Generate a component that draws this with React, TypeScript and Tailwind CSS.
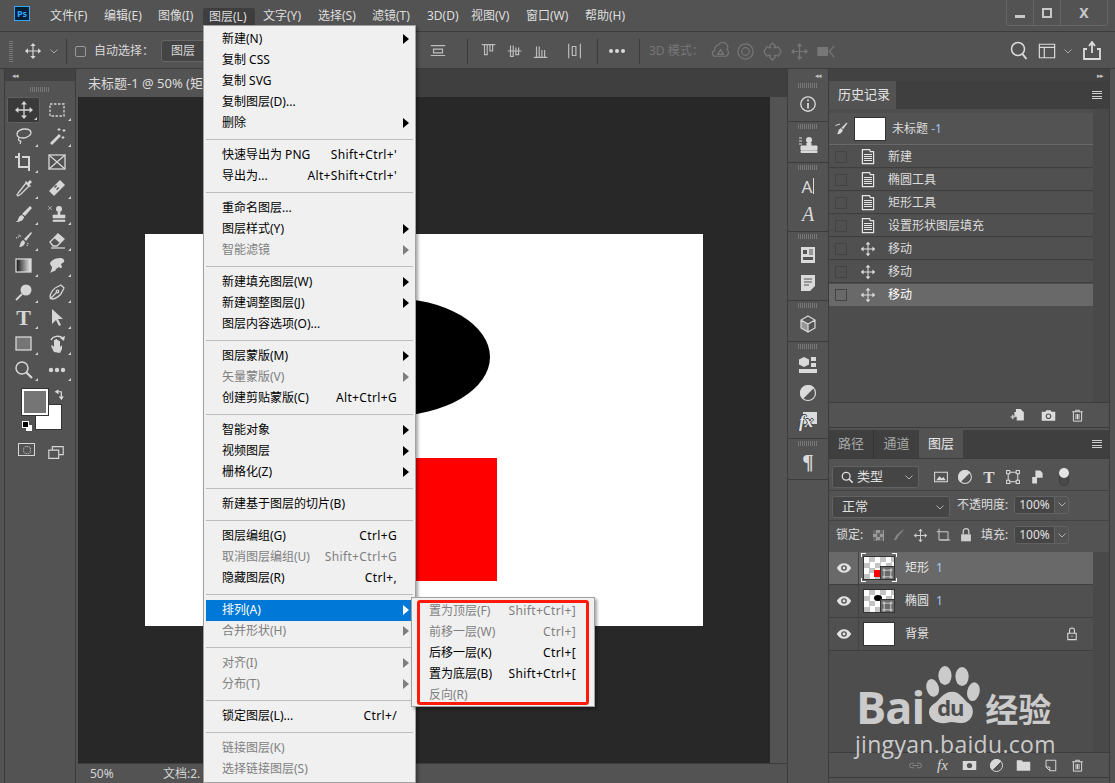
import type { ReactNode } from "react"

type MenuItem = { label: string; key?: string; arrow?: boolean; off?: boolean; active?: boolean }

// null means a separator row
const layerMenu: (MenuItem | null)[] = [
  { label: "新建(N)", arrow: true },
  { label: "复制 CSS" },
  { label: "复制 SVG" },
  { label: "复制图层(D)..." },
  { label: "删除", arrow: true },
  null,
  { label: "快速导出为 PNG", key: "Shift+Ctrl+'" },
  { label: "导出为...", key: "Alt+Shift+Ctrl+'" },
  null,
  { label: "重命名图层..." },
  { label: "图层样式(Y)", arrow: true },
  { label: "智能滤镜", arrow: true, off: true },
  null,
  { label: "新建填充图层(W)", arrow: true },
  { label: "新建调整图层(J)", arrow: true },
  { label: "图层内容选项(O)..." },
  null,
  { label: "图层蒙版(M)", arrow: true },
  { label: "矢量蒙版(V)", arrow: true, off: true },
  { label: "创建剪贴蒙版(C)", key: "Alt+Ctrl+G" },
  null,
  { label: "智能对象", arrow: true },
  { label: "视频图层", arrow: true },
  { label: "栅格化(Z)", arrow: true },
  null,
  { label: "新建基于图层的切片(B)" },
  null,
  { label: "图层编组(G)", key: "Ctrl+G" },
  { label: "取消图层编组(U)", key: "Shift+Ctrl+G", off: true },
  { label: "隐藏图层(R)", key: "Ctrl+," },
  null,
  { label: "排列(A)", arrow: true, active: true },
  { label: "合并形状(H)", arrow: true, off: true },
  null,
  { label: "对齐(I)", arrow: true, off: true },
  { label: "分布(T)", arrow: true, off: true },
  null,
  { label: "锁定图层(L)...", key: "Ctrl+/" },
  null,
  { label: "链接图层(K)", off: true },
  { label: "选择链接图层(S)", off: true },
]

const arrangeMenu: MenuItem[] = [
  { label: "置为顶层(F)", key: "Shift+Ctrl+]", off: true },
  { label: "前移一层(W)", key: "Ctrl+]", off: true },
  { label: "后移一层(K)", key: "Ctrl+[" },
  { label: "置为底层(B)", key: "Shift+Ctrl+[" },
  { label: "反向(R)", off: true },
]

function MenuRow({ item }: { item: MenuItem }) {
  const tone = item.active ? "bg-[#0078d7] text-white" : item.off ? "text-[#7f7f7f]" : "text-black"
  return (
    <div className={`relative flex h-[21px] items-center justify-between pl-[16px] pr-[16px] ${tone}`}>
      <span>{item.label}</span>
      {item.key && <span className="tracking-[0.35px]">{item.key}</span>}
      {item.arrow && (
        <span
          className={`absolute right-[4px] top-[5px] border-y-[5px] border-l-[6px] border-y-transparent ${
            item.active ? "border-l-white" : item.off ? "border-l-[#7f7f7f]" : "border-l-black"
          }`}
        />
      )}
    </div>
  )
}

function Ic({ children, size = 20, className = "" }: { children: ReactNode; size?: number; className?: string }) {
  return (
    <svg viewBox="0 0 20 20" width={size} height={size} fill="none" stroke="currentColor" strokeWidth="1.3" className={className}>
      {children}
    </svg>
  )
}

const MoveGlyph = () => (
  <>
    <path d="M10 3v14M3 10h14" />
    <path d="M10 1l3 3.4H7zM10 19l3-3.4H7zM1 10l3.4-3v6zM19 10l-3.4-3v6z" fill="currentColor" stroke="none" />
  </>
)

const Trash = () => (
  <path d="M3 5h14M7.500 5V3h5v2M4.500 5v12.500h11V5M8 8v7M10 8v7M12 8v7" />
)

const tools: ReactNode[] = [
  <MoveGlyph />,
  <rect x="3" y="4" width="14" height="12" strokeDasharray="2.500 1.500" />,
  <path d="M3 8c0-3 4-5 8-5s6 2 6 4-4 5-8 5c-3 0-6-1-6-4zM5 12c-1 2 0 3 1 3s1 1 0 3" />,
  <>
    <path d="M3 17L12 8l2 2-9 9z" fill="currentColor" stroke="none" />
    <path d="M12 2v3M10.500 3.500h3M17 3v3M15.500 4.500h3M16 10v3M14.500 11.500h3" strokeWidth="1" />
  </>,
  <path d="M1 5h4V1M5 5v10h11M15 19v-4M15 15V5H8" strokeWidth="2" />,
  <>
    <rect x="2" y="3" width="16" height="14" />
    <path d="M2 3l16 14M18 3L2 17" />
  </>,
  <>
    <path d="M12 5l3 3-8 8-3 2-1-1 2-3z" />
    <path d="M11 4l5 5 1-1-1.500-1.500L18 4l-2-2-2.500 2.500L12 3z" fill="currentColor" stroke="none" />
  </>,
  <>
    <path d="M2 13L13 2l5 5L7 18z" fill="currentColor" stroke="none" />
    <path d="M8 8l4 4" stroke="#535353" strokeWidth="3" strokeDasharray="1.500 1.500" />
  </>,
  <>
    <path d="M16 2l2 2-7 8-3-2z" fill="currentColor" stroke="none" />
    <path d="M8 11l2 2c0 3-4 5-8 5 2-1 2-3 3-5 1-1 2-2 3-2z" fill="currentColor" stroke="none" />
  </>,
  <>
    <circle cx="12" cy="5" r="3" fill="currentColor" stroke="none" />
    <path d="M11 8h2v3h5v3H6v-3h5zM6 16h12v1.500H6zM1 2l4 4M5 2L1 6" fill="currentColor" stroke="currentColor" strokeWidth=".6" />
  </>,
  <>
    <path d="M17 2l1 1-6 8-2-2z" fill="currentColor" stroke="none" />
    <path d="M9 10l2 2c0 3-3 5-6 5 1-1 1-3 2-5z" fill="currentColor" stroke="none" />
    <path d="M2 8l5-2-3-1M14 13l-1 3" strokeDasharray="1 1" />
  </>,
  <>
    <path d="M3 12l8-8 6 5-7 7H6z" />
    <path d="M11 4l6 5-4 4-6-5z" fill="currentColor" stroke="none" />
    <path d="M4 18h14" />
  </>,
  <>
    <defs>
      <linearGradient id="toolGrad" x1="0" x2="1" y1="0" y2="0">
        <stop offset="0" stopColor="#111" />
        <stop offset="1" stopColor="#eee" />
      </linearGradient>
    </defs>
    <rect x="2" y="3" width="15" height="13" fill="url(#toolGrad)" />
  </>,
  <path d="M3 17c1-2 2-4 2-6L3 8c0-3 5-6 10-6 3 0 5 2 4 4l-3 2 1 3c-1 2-2 1-3 0l-3 2-1 2c-2 0-3 1-5 2z" fill="currentColor" stroke="none" />,
  <>
    <circle cx="12" cy="8" r="5.500" fill="currentColor" stroke="none" />
    <path d="M8 12l-6 6" strokeWidth="1.800" />
  </>,
  <>
    <path d="M3 15c0-4 4-9 7-10l4-2 3 3-2 4c-1 3-6 7-10 7zM3 17l7-7" />
    <circle cx="10.500" cy="9.500" r="1.300" />
  </>,
  <span />,
  <path d="M5 1l11 10h-5l3 6-2 1-3-6-4 4z" fill="currentColor" stroke="none" />,
  <rect x="2" y="3" width="15" height="13" fill="#757575" stroke="currentColor" />,
  <>
    <path d="M7 18l-3-6 1-1 2 2V6h1.500v5-6H10v6-5h1.500v5-4H13v6l2-2v4l-2 4z" fill="currentColor" stroke="none" />
    <path d="M4 6c2-4 8-5 12-2" strokeWidth="1.500" />
    <path d="M17 7l1-5-5 2z" fill="currentColor" stroke="none" />
  </>,
  <>
    <circle cx="8" cy="8" r="6" strokeWidth="1.500" />
    <path d="M12.500 12.500L18 18" strokeWidth="2.200" />
  </>,
  <>
    <circle cx="4" cy="10" r="2.200" fill="currentColor" stroke="none" />
    <circle cx="10" cy="10" r="2.200" fill="currentColor" stroke="none" />
    <circle cx="16" cy="10" r="2.200" fill="currentColor" stroke="none" />
  </>,
]

function Handle({ className = "" }: { className?: string }) {
  return <div className={`h-[5px] w-[20px] bg-[repeating-linear-gradient(90deg,#777_0_1px,transparent_1px_2px)] ${className}`} />
}

function ToolColumn() {
  return (
    <div className="flex h-full w-[78px] shrink-0 flex-col pl-[4px] pr-[2px]">
      <div className="flex h-full flex-col border-x border-[#3c3c3c]">
        <div className="flex h-[12px] items-center bg-[#424242] pl-[7px] text-[7px] leading-none tracking-[-1px] text-[#c4c4c4]">◂◂</div>
        <div className="flex h-[16px] items-center justify-center">
          <Handle />
        </div>
        <div className="grid grid-cols-[33px_33px] auto-rows-[26px] pl-[2px] text-[#d6d6d6]">
          {tools.map((tool, i) => (
            <div
              key={i}
              className={`relative flex items-center justify-center rounded-[2px] ${
                i === 0 ? "border border-[#5f5f5f] bg-[#3a3a3a]" : ""
              }`}
            >
              {i === 16 ? (
                <span className="font-['Liberation_Serif',serif] text-[22px] font-bold leading-none">T</span>
              ) : (
                <Ic>{tool}</Ic>
              )}
              {i !== 5 && (
                <span className="absolute bottom-[2px] right-[2px] border-b-[3px] border-l-[3px] border-b-[#d0d0d0] border-l-transparent" />
              )}
            </div>
          ))}
        </div>
        {/* foreground and background swatches */}
        <div className="relative ml-[17px] mt-[6px] h-[46px] w-[48px]">
          <div className="absolute left-[13px] top-[15px] h-[26px] w-[27px] border border-[#333] bg-white" />
          <div className="absolute left-0 top-0 h-[26px] w-[26px] border-2 border-white bg-[#757575] outline outline-1 outline-[#333]" />
          <svg viewBox="0 0 12 12" width="11" height="11" className="absolute left-[32px] top-0 text-[#ddd]" fill="none" stroke="currentColor" strokeWidth="1.300">
            <path d="M1 3h7v8M5 1L2 3l3 2M6 8l2 3 2-3" />
          </svg>
          <div className="absolute left-[4px] top-[36px] h-[6px] w-[6px] bg-white" />
          <div className="absolute left-0 top-[32px] h-[7px] w-[7px] border border-white bg-black" />
        </div>
        <div className="mt-[8px] flex gap-[12px] pl-[13px] text-[#d6d6d6]">
          <div className="flex h-[13px] w-[17px] items-center justify-center border border-[#d6d6d6]">
            <span className="h-[8px] w-[8px] rounded-full border border-dotted border-[#d6d6d6]" />
          </div>
          <Ic size={18}>
            <path d="M2 8h11v9H2zM6 8V4h12v9h-5" />
          </Ic>
        </div>
      </div>
    </div>
  )
}

function TitleBar() {
  const items: [string, string][] = [
    ["文件(F)", "w-[54px]"],
    ["编辑(E)", "w-[54px]"],
    ["图像(I)", "w-[45px]"],
    ["图层(L)", "w-[60px]"],
    ["文字(Y)", "w-[55px]"],
    ["选择(S)", "w-[54px]"],
    ["滤镜(T)", "w-[55px]"],
    ["3D(D)", "w-[44px]"],
    ["视图(V)", "w-[55px]"],
    ["窗口(W)", "w-[59px]"],
    ["帮助(H)", "w-[60px]"],
  ]
  return (
    <div className="flex h-[32px] shrink-0 items-start border-b border-[#3c3c3c] text-[#dedede]">
      <div className="ml-[14px] mt-[6px] flex h-[15px] w-[16px] items-center justify-center border border-[#31a8ff] bg-[#001e36] text-[9px] font-bold leading-none text-[#31a8ff]">
        Ps
      </div>
      <div className="ml-[20px] flex h-[31px] items-center">
        {items.map(([label, width], i) => (
          <div key={label} className={width}>
            {i === 3 ? (
              <div className="mt-[2px] flex h-[18px] w-[52px] items-center rounded-t-[2px] bg-[#3e3e3e] pl-[6px]">{label}</div>
            ) : (
              <span>{label}</span>
            )}
          </div>
        ))}
      </div>
      <div className="ml-auto mr-[7px] flex h-[26px] w-[102px] rounded-b-[4px] border-x border-b border-[#666] text-[#c8c8c8]">
        <div className="flex w-[27px] items-end justify-center border-r border-[#666] pb-[7px]">
          <span className="h-[3px] w-[10px] bg-[#c8c8c8]" />
        </div>
        <div className="flex w-[27px] items-center justify-center border-r border-[#666]">
          <span className="h-[10px] w-[10px] border-2 border-[#c8c8c8]" />
        </div>
        <div className="flex flex-1 items-center justify-center text-[14px] font-bold leading-none">X</div>
      </div>
    </div>
  )
}

function AlignIcon({ d }: { d: string }) {
  return (
    <Ic size={18} className="text-[#bdbdbd]">
      <path d={d} />
    </Ic>
  )
}

function OptionsBar() {
  return (
    <div className="flex h-[37px] shrink-0 items-center border-b border-[#3c3c3c] pt-[2px] text-[#d8d8d8]">
      <div className="ml-[9px] h-[22px] w-[4px] bg-[repeating-linear-gradient(0deg,#777_0_1px,transparent_1px_2px)]" />
      <Ic size={18} className="ml-[11px]">
        <MoveGlyph />
      </Ic>
      <svg viewBox="0 0 8 5" width="8" height="5" className="ml-[8px] text-[#a8a8a8]" fill="none" stroke="currentColor">
        <path d="M.5.500L4 4l3.500-3.500" />
      </svg>
      <div className="ml-[8px] h-[25px] w-px bg-[#3c3c3c]" />
      <div className="ml-[8px] h-[11px] w-[11px] rounded-[2px] border border-[#999]" />
      <span className="ml-[8px] w-[60px]">自动选择：</span>
      <div className="ml-[7px] flex h-[22px] w-[70px] items-center rounded-[3px] border border-[#666] bg-[#444] pl-[9px]">图层</div>
      <div className="ml-[198px] flex items-center">
        <AlignIcon d="M2 4h16M2 15h16M5 8h10v4H5z" />
        <div className="ml-[20px] h-[25px] w-px bg-[#3c3c3c]" />
        <div className="ml-[12px] flex items-center gap-[8px]">
          <AlignIcon d="M2 3h15M5 3v11h3V3M11 3v7h3V3" />
          <AlignIcon d="M2 10h15M5 4v12h3V4M11 6v8h3V6" />
          <AlignIcon d="M2 17h15M5 5v12h3V5M11 9v8h3V9" />
        </div>
        <div className="ml-[16px]">
          <AlignIcon d="M3 2v16M16 2v16M7 5h4v10H7z" />
        </div>
        <div className="ml-[13px] h-[25px] w-px bg-[#3c3c3c]" />
        <div className="ml-[11px] flex gap-[2px]">
          <span className="h-[4px] w-[4px] rounded-full bg-[#d8d8d8]" />
          <span className="h-[4px] w-[4px] rounded-full bg-[#d8d8d8]" />
          <span className="h-[4px] w-[4px] rounded-full bg-[#d8d8d8]" />
        </div>
        <div className="ml-[14px] h-[25px] w-px bg-[#3c3c3c]" />
      </div>
      <span className="ml-[9px] w-[59px] text-[#777]">3D 模式：</span>
      <div className="ml-[3px] flex items-center gap-[8px] text-[#777]">
        <Ic size={19} className="-mr-[2px]">
          <path d="M8 3a5 5 0 0 1 9 5 4 4 0 0 1-3 7H5a3 3 0 0 1-1-6 5 5 0 0 1 4-6zM10 8l3 5H7z" />
        </Ic>
        <Ic size={19}>
          <circle cx="10" cy="10" r="8" />
          <circle cx="10" cy="10" r="4" />
        </Ic>
        <Ic size={19}>
          <path d="M10 1l3 3-1 2h2l2-1 3 5-3 5-2-1h-2l1 2-3 3-3-3 1-2H6l-2 1-3-5 3-5 2 1h2L7 4z" />
        </Ic>
        <Ic size={19}>
          <MoveGlyph />
        </Ic>
        <Ic size={19}>
          <path d="M1 6h10v8H1z" fill="currentColor" />
          <path d="M18 4l-5 6 5 6" />
        </Ic>
      </div>
      <div className="ml-auto mr-[13px] flex items-center text-[#dcdcdc]">
        <Ic size={20}>
          <circle cx="9" cy="8" r="6.500" strokeWidth="1.500" />
          <path d="M13.500 13l4 5" strokeWidth="2" />
        </Ic>
        <Ic size={18} className="ml-[9px]">
          <path d="M1.500 2.500h17v15h-17zM1.500 6h17M7 6v11.500" />
        </Ic>
        <svg viewBox="0 0 8 5" width="8" height="5" className="ml-[8px] text-[#a8a8a8]" fill="none" stroke="currentColor">
          <path d="M.5.500L4 4l3.500-3.500" />
        </svg>
        <Ic size={20} className="ml-[10px]">
          <path d="M5 8H2v10h16V8h-3M7 5l3-4 3 4M10 2v10" strokeWidth="1.800" />
        </Ic>
      </div>
    </div>
  )
}

function CanvasArea() {
  return (
    <div className="flex min-w-0 flex-1 flex-col">
      <div className="flex h-[28px] shrink-0 bg-[#3f3f3f]">
        <div className="flex w-[140px] items-center bg-[#535353] pl-[10px] pt-[2px] text-[13px] text-[#dcdcdc]">未标题-1 @ 50% (矩</div>
      </div>
      <div className="flex min-h-0 flex-1">
        <div className="flex flex-1 items-center justify-center bg-[#282828]">
          <div className="relative h-[392px] w-[558px] bg-white">
            <div className="absolute left-[145px] top-[64px] h-[118px] w-[200px] rounded-[50%] bg-black" />
            <div className="absolute left-[229px] top-[224px] h-[123px] w-[123px] bg-[#ff0000]" />
          </div>
        </div>
        <div className="w-[17px] shrink-0 bg-[#535353]" />
      </div>
      <div className="flex h-[20px] shrink-0 items-center border-t border-[#3c3c3c] text-[#d4d4d4]">
        <span className="ml-[12px] w-[73px]">50%</span>
        <span>文档:2.</span>
      </div>
    </div>
  )
}

function DockIcon({ children }: { children: ReactNode }) {
  return <div className="flex h-[28px] items-center justify-center text-[#dadada]">{children}</div>
}

function DockStrip() {
  const groups: ReactNode[][] = [
    [
      <Ic size={18}>
        <circle cx="10" cy="10" r="8" strokeWidth="1.500" />
        <path d="M10 9v6" strokeWidth="2" />
        <path d="M10 5v2" strokeWidth="2" />
      </Ic>,
    ],
    [
      <Ic size={20}>
        <circle cx="11" cy="5" r="3" fill="currentColor" stroke="none" />
        <path d="M9 8h4v3h6v4H3v-4h6zM3 16h16v1.500H3zM1 3h3M1 6h3M1 9h3" fill="currentColor" strokeWidth="1" />
      </Ic>,
    ],
    [
      <span className="flex items-center text-[17px] leading-none">
        A<span className="ml-[1px] h-[16px] w-px bg-[#dadada]" />
      </span>,
      <span className="font-['Liberation_Serif',serif] text-[20px] italic leading-none">A</span>,
    ],
    [
      <Ic size={20}>
        <path d="M3 2h14v16H3zM9 5v4H5V5zM5 12h10v3H5z" fill="currentColor" fillRule="evenodd" stroke="none" />
        <path d="M11 5h4M11 7h4M11 9h4" stroke="#535353" strokeWidth="1" />
      </Ic>,
      <Ic size={20}>
        <path d="M3 2h14v11l-5 5H3z" fill="currentColor" stroke="none" />
        <path d="M6 6h8M6 9h8M6 12h5" stroke="#535353" strokeWidth="1" />
      </Ic>,
    ],
    [
      <Ic size={20}>
        <path d="M10 2l7 4v8l-7 4-7-4V6zM3 6l7 4 7-4M10 10v8" strokeWidth="1.200" />
        <path d="M3 6l7 4v8l-7-4z" fill="currentColor" stroke="none" opacity=".5" />
      </Ic>,
    ],
    [
      <Ic size={20}>
        <path d="M6 2l5 2.500v5L6 12 1 9.500v-5z" fill="currentColor" stroke="none" />
        <path d="M13 2h5v4h-5zM13 8h5v4h-5z" fill="currentColor" stroke="none" />
        <path d="M1 14h18v4H1z" fill="currentColor" stroke="none" />
      </Ic>,
      <Ic size={20}>
        <circle cx="10" cy="10" r="7.500" strokeWidth="1.200" />
        <path d="M4.700 15.300L15.300 4.700A7.500 7.500 0 0 0 4.700 15.300z" fill="currentColor" />
      </Ic>,
      <div className="relative h-[18px] w-[18px]">
        <div className="absolute right-0 top-0 h-[12px] w-[14px] bg-[#dadada]" />
        <span className="absolute bottom-0 left-0 font-['Liberation_Serif',serif] text-[17px] font-bold italic leading-none text-[#e4e4e4] [text-shadow:1px_0_0_#3c3c3c,-1px_0_0_#3c3c3c,0_-1px_0_#3c3c3c]">
          fx
        </span>
      </div>,
    ],
    [<span className="font-['Liberation_Serif',serif] text-[21px] font-bold leading-none">¶</span>],
  ]
  return (
    <div className="w-[40px] shrink-0 pt-[12px]">
      {groups.map((group, i) => (
        <div key={i} className="border-b border-[#3c3c3c] pb-[2px] pt-[2px]">
          <Handle className="mx-auto" />
          <div className="mt-[2px] mb-[1px]">
            {group.map((icon, j) => (
              <DockIcon key={j}>{icon}</DockIcon>
            ))}
          </div>
        </div>
      ))}
    </div>
  )
}

function PanelMenuIcon() {
  return (
    <div className="ml-auto mr-[7px] flex h-[9px] w-[10px] flex-col justify-between self-center">
      <span className="h-px bg-[#cfcfcf]" />
      <span className="h-px bg-[#cfcfcf]" />
      <span className="h-px bg-[#cfcfcf]" />
      <span className="h-px bg-[#cfcfcf]" />
    </div>
  )
}

const DocIcon = () => (
  <Ic size={17} className="text-[#e6e6e6]">
    <path d="M3 1.500h9l1 2.500h4v15H3z" strokeWidth="1.500" />
    <path d="M5 7.500h10M5 10h10M5 12.500h10M5 15h10" strokeWidth="1.300" />
  </Ic>
)

function HistoryPanel() {
  const rows: [string, boolean][] = [
    ["新建", true],
    ["椭圆工具", true],
    ["矩形工具", true],
    ["设置形状图层填充", true],
    ["移动", false],
    ["移动", false],
    ["移动", false],
  ]
  return (
    <div className="flex h-[347px] flex-col border-b border-[#3c3c3c] bg-[#4d4d4d]">
      <div className="flex h-[28px] shrink-0 bg-[#3f3f3f]">
        <div className="flex w-[67px] items-center bg-[#535353] pl-[9px] text-[13px] text-[#e4e4e4]">历史记录</div>
        <PanelMenuIcon />
      </div>
      <div className="flex min-h-0 flex-1">
        <div className="flex-1 pt-[4px]">
          <div className="flex h-[32px] items-center border-b border-[#6a6a6a] bg-[#535353]">
            <Ic size={15} className="ml-[5px] text-[#dcdcdc]">
              <path d="M17 2l1 1-6 8-2-2z" fill="currentColor" stroke="none" />
              <path d="M9 10l2 2c0 3-3 5-6 5 1-1 1-3 2-5zM2 6l6-2" fill="currentColor" />
            </Ic>
            <div className="ml-[5px] h-[24px] w-[32px] border border-[#333] bg-white" />
            <span className="ml-[6px] text-[#dcdcdc]">
              未标题 <span className="text-[#9cc4ee]">-1</span>
            </span>
          </div>
          {rows.map(([label, doc], i) => (
            <div
              key={i}
              className={`mb-px mt-px flex h-[22px] items-center ${
                i === 6 ? "bg-[#696969] text-white" : "border-b border-[#3f3f3f] bg-[#505050] text-[#dcdcdc]"
              }`}
            >
              <div className="ml-[6px] h-[12px] w-[12px] border border-[#434343]" />
              <div className="ml-[13px] flex w-[16px] justify-center">
                {doc ? (
                  <DocIcon />
                ) : (
                  <Ic size={16} className="text-[#e0e0e0]">
                    <MoveGlyph />
                  </Ic>
                )}
              </div>
              <span className="ml-[12px]">{label}</span>
            </div>
          ))}
        </div>
        <div className="w-[16px] shrink-0 bg-[#494949]" />
      </div>
      <div className="flex h-[25px] shrink-0 items-center justify-end gap-[14px] border-t border-[#3c3c3c] bg-[#535353] pr-[24px] text-[#dcdcdc]">
        <Ic size={15} className="mr-[3px]">
          <path d="M10 2h5l4 4v10h-8v-5H8V6h2zM2 12h6M5 9v6" fill="currentColor" strokeWidth="1.500" />
        </Ic>
        <Ic size={15}>
          <path d="M1 5h5l1-2h6l1 2h5v12H1z" fill="currentColor" stroke="none" />
          <circle cx="10" cy="11" r="3" stroke="#535353" strokeWidth="1.500" />
        </Ic>
        <Ic size={15}>
          <Trash />
        </Ic>
      </div>
    </div>
  )
}

function SelectBox({ label, className, icon }: { label: string; className: string; icon?: ReactNode }) {
  return (
    <div className={`flex items-center rounded-[3px] border border-[#626262] bg-[#454545] text-[13px] text-[#e0e0e0] ${className}`}>
      {icon}
      <span>{label}</span>
      <svg viewBox="0 0 8 5" width="8" height="5" className="ml-auto mr-[5px] text-[#b0b0b0]" fill="none" stroke="currentColor">
        <path d="M.5.500L4 4l3.500-3.500" />
      </svg>
    </div>
  )
}

function PercentBox({ className = "" }: { className?: string }) {
  return (
    <div className={`ml-[5px] flex h-[18px] w-[55px] rounded-[3px] border border-[#626262] text-[#e0e0e0] ${className}`}>
      <div className="flex w-[39px] items-center justify-center bg-[#454545]">100%</div>
      <div className="flex flex-1 items-center justify-center border-l border-[#626262]">
        <svg viewBox="0 0 8 5" width="8" height="5" className="text-[#b0b0b0]" fill="none" stroke="currentColor">
          <path d="M.5.500L4 4l3.500-3.500" />
        </svg>
      </div>
    </div>
  )
}

function Thumb({ kind, selected }: { kind: "rect" | "ellipse" | "white"; selected?: boolean }) {
  return (
    <div className="relative ml-[4px] h-[24px] w-[32px] shrink-0">
      <div
        className={`relative h-full w-full overflow-hidden border border-[#333] ${
          kind === "white" ? "bg-white" : "bg-[repeating-conic-gradient(#c4c4c4_0_25%,#fff_0_50%)] bg-[length:11px_11px]"
        }`}
      >
        {kind === "rect" && <div className="absolute left-[10px] top-[13px] h-[7px] w-[6px] bg-[#ff0000]" />}
        {kind === "ellipse" && <div className="absolute left-[10px] top-[5px] h-[6px] w-[8px] rounded-[50%] bg-black" />}
      </div>
      {kind !== "white" && (
        <div className="absolute bottom-0 right-0 flex h-[14px] w-[15px] items-center justify-center border border-[#333] bg-[#6a6a6a] text-[#ddd]">
          <Ic size={11}>
            <path d="M4 4h12v12H4z" strokeWidth="1.500" />
            <path d="M2 2h3v3H2zM15 2h3v3h-3zM2 15h3v3H2zM15 15h3v3h-3z" fill="#6a6a6a" strokeWidth="1.500" />
          </Ic>
        </div>
      )}
      {selected && (
        <>
          <span className="absolute -left-[2px] -top-[3px] h-[4px] w-[5px] border-l border-t border-white" />
          <span className="absolute -right-[2px] -top-[3px] h-[4px] w-[5px] border-r border-t border-white" />
          <span className="absolute -bottom-[2px] -left-[2px] h-[4px] w-[5px] border-b border-l border-white" />
          <span className="absolute -bottom-[2px] -right-[2px] h-[4px] w-[5px] border-b border-r border-white" />
        </>
      )}
    </div>
  )
}

function LayerRow({ name, num, kind, selected, locked }: { name: string; num?: string; kind: "rect" | "ellipse" | "white"; selected?: boolean; locked?: boolean }) {
  return (
    <div className={`flex h-[33px] items-center border-b border-[#3f3f3f] ${selected ? "bg-[#696969]" : "bg-[#505050]"}`}>
      <div className="flex h-full w-[30px] shrink-0 items-center justify-center border-r border-[#434343] text-[#e2e2e2]">
        <Ic size={16}>
          <path d="M1 10c2-4 5-6 9-6s7 2 9 6c-2 4-5 6-9 6s-7-2-9-6z" fill="currentColor" stroke="none" />
          <circle cx="10" cy="10" r="3.500" fill="#535353" stroke="none" />
          <circle cx="10" cy="10" r="1.800" fill="currentColor" stroke="none" />
        </Ic>
      </div>
      <Thumb kind={kind} selected={selected} />
      <span className="ml-[10px] text-[#e6e6e6]">
        {name}
        {num && <span className="ml-[7px] text-[#a6c8ee]">{num}</span>}
      </span>
      {locked && (
        <Ic size={14} className="ml-auto mr-[14px] text-[#dcdcdc]">
          <path d="M4 9h12v9H4zM6.500 9V5a3.500 3.500 0 0 1 7 0v4M10 12v2" strokeWidth="1.500" />
        </Ic>
      )}
    </div>
  )
}

function LayersPanel() {
  return (
    <div className="mt-[2px] flex min-h-0 flex-1 flex-col border-b border-[#3c3c3c] bg-[#535353] text-[#dcdcdc]">
      <div className="flex h-[29px] shrink-0 border-b border-[#3c3c3c] bg-[#3f3f3f] text-[13px]">
        <div className="flex w-[45px] items-center justify-center border-r border-[#333] text-[#a8a8a8]">路径</div>
        <div className="flex w-[45px] items-center justify-center text-[#a8a8a8]">通道</div>
        <div className="flex w-[44px] items-center justify-center bg-[#535353] text-[#e8e8e8]">图层</div>
        <PanelMenuIcon />
      </div>
      <div className="flex h-[32px] shrink-0 items-center border-b border-[#434343] pl-[3px] pt-[5px]">
        <SelectBox
          label="类型"
          className="h-[22px] w-[87px] pl-[8px]"
          icon={
            <Ic size={13} className="mr-[3px]">
              <circle cx="8" cy="8" r="6" strokeWidth="2" />
              <path d="M12 12l6 6" strokeWidth="2.500" />
            </Ic>
          }
        />
        <div className="ml-[14px] flex items-center gap-[8px] text-[#dadada]">
          <Ic size={16}>
            <path d="M2 4h16v12H2z" />
            <path d="M4 14l4-5 3 3 2-2 3 4z" fill="currentColor" stroke="none" />
          </Ic>
          <Ic size={16}>
            <circle cx="10" cy="10" r="8" />
            <path d="M4.300 15.700L15.700 4.300A8 8 0 0 0 4.300 15.700z" fill="currentColor" />
          </Ic>
          <span className="flex w-[16px] justify-center font-['Liberation_Serif',serif] text-[17px] font-bold leading-none">T</span>
          <Ic size={16}>
            <path d="M4 4h12v12H4z" />
            <path d="M2 2h4v4H2zM14 2h4v4h-4zM2 14h4v4H2zM14 14h4v4h-4z" fill="#535353" />
          </Ic>
          <Ic size={16}>
            <path d="M8 2h6l3 3v6h-7v7H4v-8h4z" fill="currentColor" stroke="none" />
          </Ic>
        </div>
        <div className="relative ml-[14px] h-[18px] w-[10px] rounded-[5px] border border-[#3c3c3c] bg-[#4a4a4a]">
          <span className="absolute -left-[1px] -top-[1px] h-[10px] w-[10px] rounded-full bg-[#e4e4e4]" />
        </div>
      </div>
      <div className="flex h-[30px] shrink-0 items-center border-b border-[#434343] pl-[3px] pt-[3px]">
        <SelectBox label="正常" className="h-[22px] w-[118px] pl-[9px]" />
        <span className="-mt-[5px] ml-[7px] w-[52px]">不透明度:</span>
        <PercentBox className="-mt-[5px]" />
      </div>
      <div className="flex h-[31px] shrink-0 items-center pb-[3px] pl-[7px]">
        <span className="w-[37px]">锁定:</span>
        <div className="flex items-center gap-[8px] text-[#cfcfcf]">
          <div className="h-[11px] w-[11px] bg-[repeating-conic-gradient(#999_0_25%,#666_0_50%)] bg-[length:7px_7px]" />
          <Ic size={14} className="-ml-[1px] text-[#888]">
            <path d="M17 2l1 1-8 9-2-2zM8 10l2 2c0 3-3 5-6 6 1-2 2-5 4-8z" fill="currentColor" stroke="none" />
          </Ic>
          <Ic size={15}>
            <MoveGlyph />
          </Ic>
          <Ic size={15}>
            <path d="M1 5h15v11H5M4 1v15h15" />
          </Ic>
          <Ic size={14}>
            <path d="M3 9h14v10H3z" fill="currentColor" stroke="none" />
            <path d="M6 9V5a4 4 0 0 1 8 0v4" strokeWidth="1.800" />
          </Ic>
        </div>
        <span className="ml-[8px] w-[28px]">填充:</span>
        <PercentBox />
      </div>
      <div className="flex min-h-0 flex-1 bg-[#4d4d4d]">
        <div className="flex-1">
          <LayerRow name="矩形" num="1" kind="rect" selected />
          <LayerRow name="椭圆" num="1" kind="ellipse" />
          <LayerRow name="背景" kind="white" locked />
        </div>
        <div className="w-[16px] shrink-0 bg-[#494949]" />
      </div>
      <div className="flex h-[25px] shrink-0 items-center justify-end gap-[12px] border-t border-[#3c3c3c] pr-[24px] text-[#d8d8d8]">
        <Ic size={15} className="text-[#888]">
          <path d="M8 7H5a3 3 0 0 0 0 6h3M12 7h3a3 3 0 0 1 0 6h-3M6 10h8" />
        </Ic>
        <span className="flex w-[15px] justify-center font-['Liberation_Serif',serif] text-[15px] italic leading-none">fx</span>
        <Ic size={15}>
          <path d="M1 4h18v12H1z" fill="currentColor" stroke="none" />
          <circle cx="10" cy="10" r="3.500" fill="#535353" stroke="none" />
        </Ic>
        <Ic size={15}>
          <circle cx="10" cy="10" r="8" />
          <path d="M4.300 15.700L15.700 4.300A8 8 0 0 0 4.300 15.700z" fill="currentColor" />
        </Ic>
        <Ic size={15}>
          <path d="M1 3h7l1 2h10v12H1z" fill="currentColor" stroke="none" />
        </Ic>
        <Ic size={15}>
          <path d="M4 3h13v14H9l-5-5zM4 12h5v5" />
        </Ic>
        <Ic size={15}>
          <Trash />
        </Ic>
      </div>
    </div>
  )
}

function RightDock() {
  return (
    <div className="flex h-full w-[328px] shrink-0 border-l border-[#3c3c3c]">
      <DockStrip />
      <div className="flex w-[282px] shrink-0 flex-col border-x border-[#3c3c3c]">
        <div className="flex h-[12px] shrink-0 items-center justify-between bg-[#424242] px-[6px] text-[7px] leading-none tracking-[-1px] text-[#c4c4c4]">
          <span className="-ml-[20px]">◂◂</span>
          <span>▸▸</span>
        </div>
        <HistoryPanel />
        <LayersPanel />
        <div className="h-[5px] shrink-0" />
      </div>
    </div>
  )
}

function Watermark() {
  return (
    <div className="pointer-events-none absolute left-[855px] top-[665px] h-[92px] w-[200px] font-['Open_Sans',sans-serif] text-[#cbcbcb]">
      <div className="flex h-[66px] items-start">
        <span className="ml-[1px] mt-[20px] text-[45px] font-bold leading-[44px] tracking-[-1px]">Bai</span>
        <div className="relative ml-[2px] h-[61px] w-[55px] shrink-0">
          <svg viewBox="0 0 58 64" width="55" height="61" className="absolute left-0 top-0" fill="currentColor">
            <ellipse cx="20" cy="11" rx="7" ry="10" />
            <ellipse cx="38" cy="12" rx="7" ry="10" />
            <ellipse cx="7" cy="24" rx="6.500" ry="9.500" transform="rotate(-15 7 24)" />
            <ellipse cx="50" cy="28" rx="6.500" ry="10" transform="rotate(12 50 28)" />
            <path d="M28 28c8 0 11 8 18 13 7 6 3 21-10 20-4 0-6-1-9-1s-6 2-11 1C3 60-1 47 8 41c7-4 9-13 20-13z" />
          </svg>
          <span className="absolute left-[11px] top-[31px] text-[22px] font-bold leading-none tracking-[-1px] text-[#4d4d4d]">du</span>
        </div>
        <span className="ml-[4px] mt-[24px] font-['Noto_Sans_CJK_SC',sans-serif] text-[33px] font-bold leading-[38px]">经验</span>
      </div>
      <div className="whitespace-nowrap text-[23px] leading-[26px] tracking-[0.3px]">jingyan.baidu.com</div>
    </div>
  )
}

export default function App() {
  return (
    <div className="relative flex h-[783px] w-[1115px] flex-col overflow-hidden bg-[#535353] font-['Noto_Sans','Noto_Sans_CJK_SC',sans-serif] text-[12px]">
      <TitleBar />
      <OptionsBar />
      <div className="flex min-h-0 flex-1">
        <ToolColumn />
        <CanvasArea />
        <RightDock />
      </div>

      {/* open layer menu */}
      <div className="absolute left-[203px] top-[25px] h-[758px] w-[213px] border border-[#a0a0a0] bg-[#f0f0f0] pl-[2px] pr-[2px] pt-[2.500px] shadow-[2px_2px_3px_rgba(0,0,0,.35)]">
        {layerMenu.map((item, i) =>
          item ? (
            <MenuRow key={i} item={item} />
          ) : (
            <div key={i} className="flex h-[11px] items-center">
              <div className="h-px w-full bg-[#bdbdbd]" />
            </div>
          ),
        )}
      </div>

      {/* arrange submenu */}
      <div className="absolute left-[411px] top-[597px] h-[110px] w-[184px] border border-[#a0a0a0] bg-[#f0f0f0] pt-[2px] shadow-[2px_2px_3px_rgba(0,0,0,.35)]">
        <div className="pl-[1px] pr-[2px]">
          {arrangeMenu.map((item) => (
            <MenuRow key={item.label} item={item} />
          ))}
        </div>
        <div className="absolute left-[5px] top-[2px] h-[105px] w-[172px] rounded-[3px] border-[3px] border-[#ff1a0a]" />
      </div>

      <Watermark />
    </div>
  )
}
